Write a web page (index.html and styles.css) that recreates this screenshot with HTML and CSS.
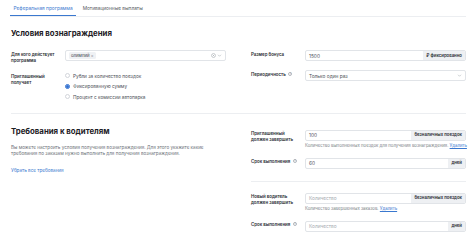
FILE: index.html
```html
<!DOCTYPE html>
<html lang="ru">
<head>
  <meta charset="UTF-8" />
  <meta name="viewport" content="width=device-width, initial-scale=1" />
  <title>Реферальная программа</title>
  <link rel="stylesheet" href="styles.css">
</head>
<body>
  <nav class="tabs">
    <div class="tab tab-active">Реферальная программа</div>
    <div class="tab">Мотивационные выплаты</div>
  </nav>

  <main class="page">
    <!-- Условия вознаграждения -->
    <section class="block block-first">
      <div class="col">
        <h2 class="block-title">Условия вознаграждения</h2>
        <div class="field">
          <div class="field-label">Для кого действует программа</div>
          <div class="field-control">
            <div class="select">
              <span class="tag">олимпий <span class="tag-x">×</span></span>
              <span class="select-icons">
                <svg class="icon-clear" viewBox="0 0 10 10"><circle cx="5" cy="5" r="4" fill="none" stroke="#9aa0a6" stroke-width="1"/><path d="M3.5 3.5l3 3M6.5 3.5l-3 3" stroke="#9aa0a6" stroke-width="1"/></svg>
                <svg class="icon-chevron" viewBox="0 0 10 10"><path d="M2 3.5l3 3 3-3" fill="none" stroke="#9aa0a6" stroke-width="1"/></svg>
              </span>
            </div>
          </div>
        </div>
        <div class="field">
          <div class="field-label">Приглашенный получает</div>
          <div class="field-control radios">
            <div class="radio"><span class="radio-dot"></span>Рубли за количество поездок</div>
            <div class="radio radio-checked"><span class="radio-dot"></span>Фиксированную сумму</div>
            <div class="radio"><span class="radio-dot"></span>Процент с комиссии автопарка</div>
          </div>
        </div>
      </div>

      <div class="col col-shift">
        <div class="field">
          <div class="field-label">Размер бонуса</div>
          <div class="field-control">
            <div class="input"><span class="input-value">1500</span><span class="addon">₽ фиксированно</span></div>
          </div>
        </div>
        <div class="field">
          <div class="field-label">Периодичность <span class="hint">?</span></div>
          <div class="field-control">
            <div class="input"><span class="input-value">Только один раз</span>
              <svg class="icon-chevron select-arrow" viewBox="0 0 10 10"><path d="M2 3.5l3 3 3-3" fill="none" stroke="#9aa0a6" stroke-width="1"/></svg>
            </div>
          </div>
        </div>
      </div>
    </section>

    <!-- Требования к водителям -->
    <section class="block block-divided">
      <div class="col">
        <h2 class="block-title">Требования к водителям</h2>
        <p class="block-text">Вы можете настроить условия получения вознаграждения. Для этого укажите какие требования по заказам нужно выполнить для получения вознаграждения.</p>
        <a class="link link-block" href="#">Убрать все требования</a>
      </div>

      <div class="col col-nudge">
        <div class="group">
          <div class="field">
            <div class="field-label">Приглашенный должен завершить</div>
            <div class="field-control">
              <div class="input"><span class="input-value">100</span><span class="addon">безналичных поездок</span></div>
              <div class="help">Количество выполненных поездок для получения вознаграждения. <a class="link link-under" href="#">Удалить</a></div>
            </div>
          </div>
          <div class="field">
            <div class="field-label">Срок выполнения <span class="hint">?</span></div>
            <div class="field-control">
              <div class="input"><span class="input-value">60</span><span class="addon">дней</span></div>
            </div>
          </div>
        </div>

        <div class="group group-divided">
          <div class="field">
            <div class="field-label">Новый водитель должен завершить</div>
            <div class="field-control">
              <div class="input"><span class="input-value placeholder">Количество</span><span class="addon">безналичных поездок</span></div>
              <div class="help">Количество завершенных заказов. <a class="link link-under" href="#">Удалить</a></div>
            </div>
          </div>
          <div class="field">
            <div class="field-label">Срок выполнения <span class="hint">?</span></div>
            <div class="field-control">
              <div class="input"><span class="input-value placeholder">Количество</span><span class="addon">дней</span></div>
            </div>
          </div>
        </div>
      </div>
    </section>
  </main>
</body>
</html>
```

FILE: styles.css
```css
* {
  box-sizing: border-box;
}

body {
  margin: 0;
  background: #fff;
  color: #21242a;
  font-family: 'Inter', 'Noto Sans', Arial, sans-serif;
  font-size: 4.4px;
  line-height: 6px;
}

/* Tabs */
.tabs {
  display: flex;
  gap: 3px;
  margin: 0 8px 0 10px;
  height: 17px;
  border-bottom: 1px solid #eceef1;
}
.tab {
  padding: 2px 3.5px 0;
  font-size: 4.8px;
  line-height: 13.5px;
  color: #555a61;
}
.tab-active {
  color: #3a78cf;
  border-bottom: 1.5px solid #3a78cf;
}

/* Page */
.page {
  padding: 0 8px 0 11px;
}

.block {
  display: grid;
  grid-template-columns: minmax(0, 1fr) minmax(0, 1fr);
  column-gap: 25px;
  padding-top: 12px;
  padding-bottom: 13px;
}
.block-divided {
  border-top: 1px solid #eceef1;
  padding-top: 13px;
}

.col {
  display: flex;
  flex-direction: column;
  gap: 9px;
}
.col-shift {
  padding-top: 21px;
}
.col-nudge {
  padding-top: 3px;
}

.block-title {
  margin: 0;
  font-size: 7.8px;
  line-height: 9px;
  font-weight: 700;
  color: #1d2025;
}
.block-first .block-title {
  margin-bottom: 3px;
}

.block-text {
  margin: 0;
  color: #6b7078;
  font-size: 4.6px;
  line-height: 6.5px;
  max-width: 215px;
}

.link {
  color: #3a78cf;
  text-decoration: none;
}
.link-block {
  margin-top: 1px;
  font-size: 4.6px;
}
.link-under {
  text-decoration: underline;
}

/* Fields */
.field {
  display: flex;
  align-items: flex-start;
}
.field-label {
  width: 54px;
  flex: none;
  padding-top: 1.5px;
  padding-right: 8px;
  font-weight: 600;
  color: #2a2d33;
}
.field-control {
  flex: 1;
  min-width: 0;
}

.hint {
  display: inline-block;
  width: 4px;
  height: 4px;
  margin-left: 1.5px;
  border: 0.5px solid #b4b8be;
  border-radius: 50%;
  font-size: 3px;
  line-height: 3px;
  text-align: center;
  font-weight: 400;
  color: #9aa0a6;
  vertical-align: 1px;
}

.input,
.select {
  display: flex;
  align-items: center;
  height: 11px;
  border: 0.5px solid #e1e4e8;
  border-radius: 2px;
  background: #fff;
  overflow: hidden;
  font-size: 4.8px;
}
.input-value {
  flex: 1;
  padding-left: 3px;
  color: #4a4e55;
}
.placeholder {
  color: #a3a8ae;
}
.addon {
  align-self: stretch;
  display: flex;
  align-items: center;
  padding: 0 3px;
  background: #eef0f3;
  font-size: 4.3px;
  font-weight: 600;
  color: #2a2d33;
}

.select {
  padding: 0 3px;
}
.tag {
  padding: 0 2px;
  line-height: 7px;
  border-radius: 1.5px;
  background: #eff1f4;
  font-size: 4.3px;
  color: #3d4148;
}
.tag-x {
  color: #8b9097;
}
.select-icons {
  margin-left: auto;
  display: flex;
  align-items: center;
  gap: 1px;
}
.icon-clear,
.icon-chevron {
  width: 5px;
  height: 5px;
  display: block;
}
.select-arrow {
  margin-right: 3px;
}

.help {
  margin-top: 2px;
  color: #7a7f86;
  font-size: 4.3px;
  white-space: nowrap;
}

/* Radios */
.radios {
  display: flex;
  flex-direction: column;
  gap: 4.5px;
}
.radio {
  display: flex;
  align-items: center;
  gap: 3px;
  font-size: 4.7px;
  color: #4a4e55;
}
.radio-dot {
  width: 5px;
  height: 5px;
  border-radius: 50%;
  border: 0.5px solid #d2d5da;
  background: #fff;
}
.radio-checked .radio-dot {
  border: 1.5px solid #2f6fd0;
  background: #fff;
  box-shadow: inset 0 0 0 2px #2f6fd0;
}

/* Right column groups */
.group {
  display: flex;
  flex-direction: column;
  gap: 9px;
}
.group-divided {
  margin-top: 3px;
  padding-top: 11px;
  border-top: 1px solid #eceef1;
}
```
